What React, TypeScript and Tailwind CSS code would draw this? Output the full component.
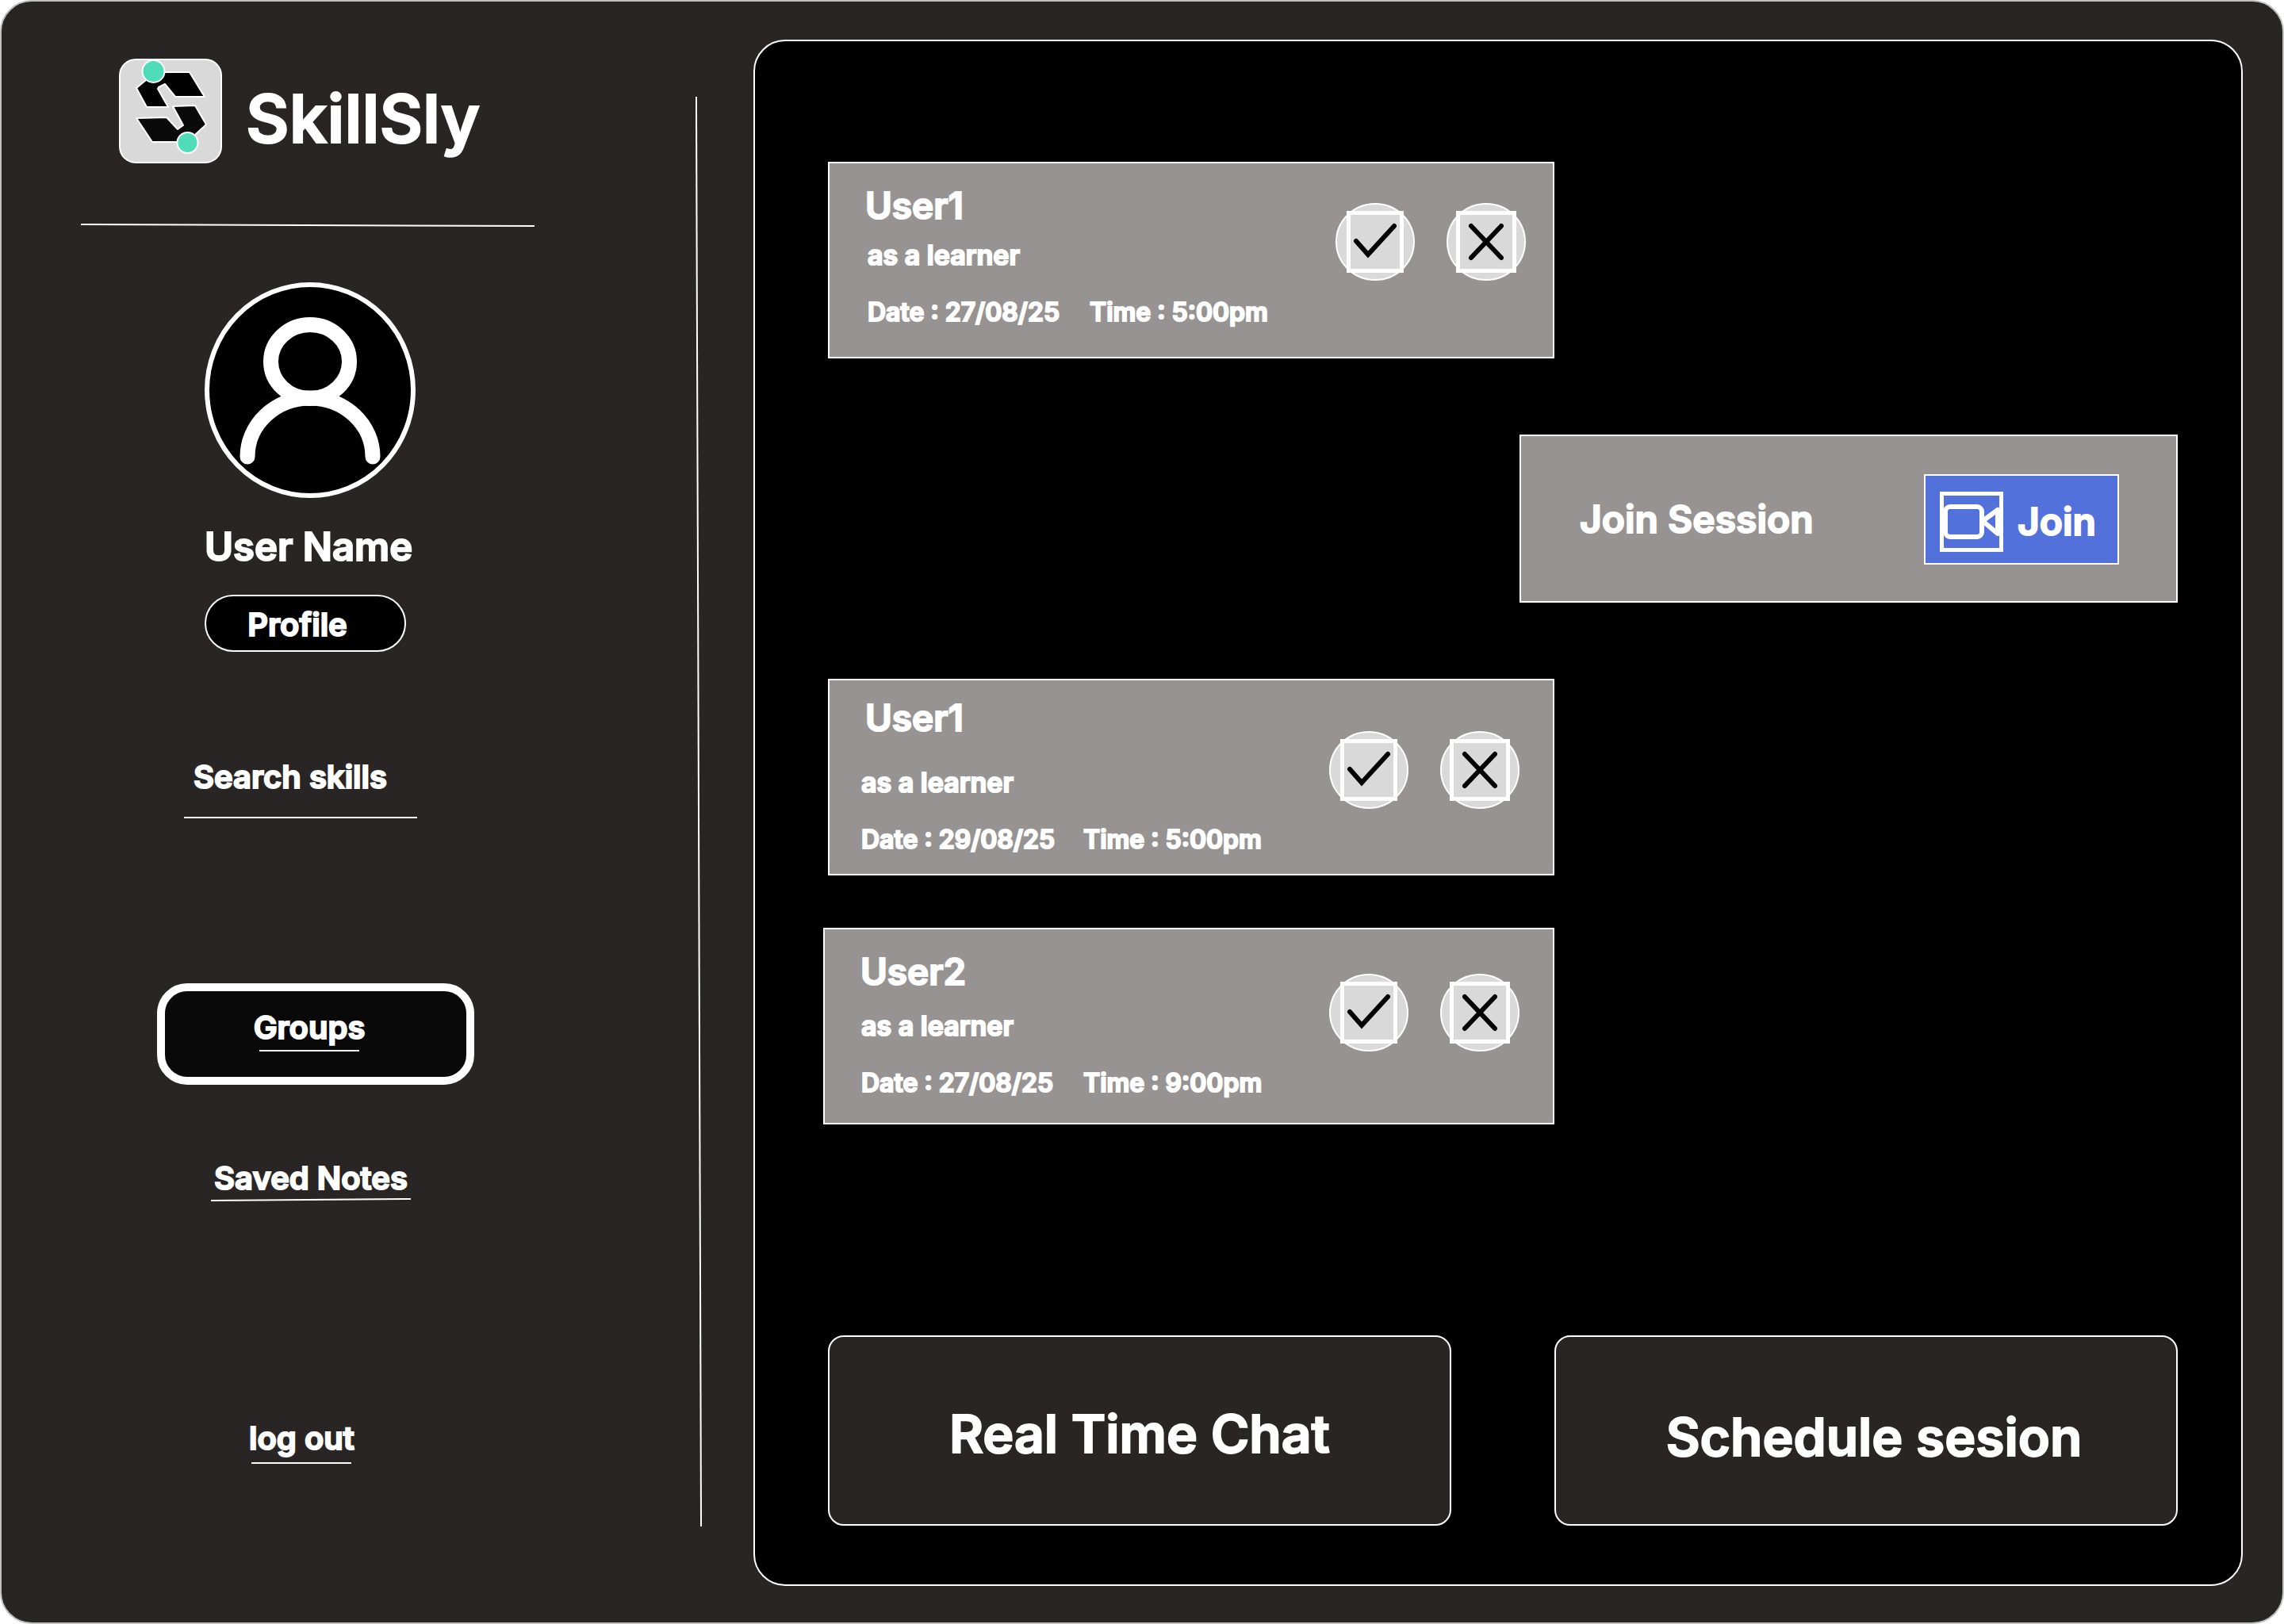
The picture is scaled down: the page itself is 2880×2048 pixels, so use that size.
type RuleProps = { x1: number; y1: number; x2: number; y2: number; className: string };

function SlantedRule({ x1, y1, x2, y2, className }: RuleProps) {
  return (
    <svg className={className} viewBox="0 0 100 100" preserveAspectRatio="none" aria-hidden="true">
      <line x1={x1} y1={y1} x2={x2} y2={y2} stroke="#fff" strokeWidth={2} vectorEffect="non-scaling-stroke" />
    </svg>
  );
}

function Logo() {
  return (
    <svg className="h-[132px] w-[130px] shrink-0" viewBox="0 0 130 132" role="img" aria-label="SkillSly logo">
      <rect x="1" y="1" width="128" height="130" rx="20" fill="#d9d9d9" stroke="#fff" strokeWidth="2" />
      <path d="M34 27 L22 37 L35 61 H62 L49 38 L50 36 L58 32 L71 48 H108 L89 17 H46 Z" fill="#000" stroke="#fff" strokeWidth="2" strokeLinejoin="round" />
      <path d="M68 60 L96 59 L110 83 L96 96 L82 105 H42 L22 75 L60 74 L74 89 L81 84 Z" fill="#0a0a0a" stroke="#fff" strokeWidth="2" strokeLinejoin="round" />
      <circle cx="43.500" cy="16" r="14" fill="#4fdcb9" stroke="#fff" strokeWidth="2" />
      <circle cx="86.500" cy="106" r="13" fill="#4fdcb9" stroke="#fff" strokeWidth="2" />
    </svg>
  );
}

function Avatar() {
  return (
    <svg className="h-[272px] w-[266px]" viewBox="0 0 266 272" role="img" aria-label="User avatar">
      <ellipse cx="133" cy="136" rx="130" ry="133" fill="#000" stroke="#fff" strokeWidth="6" />
      <ellipse cx="133" cy="100" rx="49.500" ry="46.500" fill="none" stroke="#fff" strokeWidth="19" />
      <path d="M54 220 a79 74 0 0 1 158 0" fill="none" stroke="#fff" strokeWidth="19" strokeLinecap="round" />
    </svg>
  );
}

function CheckIcon() {
  return (
    <svg className="h-[98px] w-[100px]" viewBox="0 0 100 98" aria-hidden="true">
      <ellipse cx="50" cy="49" rx="49" ry="48" fill="#d9d9d9" stroke="#fff" strokeWidth="2" />
      <rect x="16.500" y="12.500" width="67" height="73" fill="#d9d9d9" stroke="#fff" strokeWidth="5" />
      <path d="M26 48 L41 65 L74 29" fill="none" stroke="#000" strokeWidth="6" strokeLinecap="round" />
    </svg>
  );
}

function CrossIcon() {
  return (
    <svg className="h-[98px] w-[100px]" viewBox="0 0 100 98" aria-hidden="true">
      <ellipse cx="50" cy="49" rx="49" ry="48" fill="#d9d9d9" stroke="#fff" strokeWidth="2" />
      <rect x="14.500" y="12.500" width="71" height="73" fill="#d9d9d9" stroke="#fff" strokeWidth="5" />
      <path d="M31 29 L69 69 M69 29 L31 69" fill="none" stroke="#000" strokeWidth="6" strokeLinecap="round" />
    </svg>
  );
}

function VideoIcon() {
  return (
    <svg className="h-[76px] w-[80px] shrink-0" viewBox="0 0 80 76" aria-hidden="true">
      <rect x="2.500" y="2.500" width="75" height="71" fill="none" stroke="#fff" strokeWidth="5" />
      <rect x="7" y="19" width="46" height="38" rx="6" fill="none" stroke="#fff" strokeWidth="6" />
      <path d="M54 37 L73 23 V53 Z" fill="none" stroke="#fff" strokeWidth="6" strokeLinejoin="round" />
    </svg>
  );
}

type Request = {
  name: string;
  date: string;
  time: string;
  card: string;
  title: string;
  details: string;
  dateGap: string;
  actions: string;
};

function RequestCard({ name, date, time, card, title, details, dateGap, actions }: Request) {
  return (
    <article className={`flex items-start justify-between border-2 border-white bg-[#979392] ${card}`}>
      <div>
        <h2 className={`text-[46px] leading-14 ${title}`}>{name}</h2>
        <div className={`leading-10 ${details}`}>
          <p className="text-[34px]">as a learner</p>
          <p className={`flex text-[32px] ${dateGap}`}>
            <span className="w-[280px]">Date : {date}</span>
            <span>Time : {time}</span>
          </p>
        </div>
      </div>
      <div className={`flex gap-10 ${actions}`}>
        <button type="button" aria-label={`Accept ${name}`} className="rounded-full">
          <CheckIcon />
        </button>
        <button type="button" aria-label={`Decline ${name}`} className="rounded-full">
          <CrossIcon />
        </button>
      </div>
    </article>
  );
}

export default function App() {
  return (
    <div className="bg-white">
      <div className="flex min-h-screen rounded-[40px] border-2 border-[#c0c0c0] bg-[#292524] font-['Inter',sans-serif] font-semibold text-white [-webkit-text-stroke:2px_white]">
        <aside className="flex w-[948px] shrink-0 justify-between pr-[65px] pl-[100px]">
          <div className="flex flex-col items-start pt-[72px]">
            <header className="ml-12 flex items-center gap-[30px]">
              <Logo />
              <h1 className="mt-5 text-[84px] leading-24">SkillSly</h1>
            </header>
            <SlantedRule x1={0} y1={25} x2={100} y2={75} className="mt-[76px] h-1 w-[572px]" />

            <section className="flex flex-col items-start pl-[156px]">
              <div className="mt-[70px]">
                <Avatar />
              </div>
              <h2 className="mt-[34px] text-[49px] leading-14">User Name</h2>
              <button type="button" className="mt-8 h-[72px] w-[254px] rounded-full border-2 border-white bg-black pt-1 pr-5 text-[40px] leading-12">
                Profile
              </button>
            </section>

            <input
              type="text"
              aria-label="Search skills"
              placeholder="Search skills"
              className="mt-[124px] ml-[130px] h-[86px] w-[294px] border-b-2 border-white bg-transparent pb-[18px] pl-3 text-[40px] placeholder:text-white focus:outline-none"
            />

            <nav className="flex flex-col items-start pl-24">
              <a href="#groups" className="mt-[208px] flex h-32 w-[400px] flex-col items-center justify-center gap-1 rounded-[38px] border-10 border-white bg-[#090909] pr-4 pb-[10px] text-[40px] leading-12">
                Groups
                <span className="h-[2px] w-[126px] bg-white" />
              </a>
              <a href="#notes" className="mt-[94px] ml-[68px] flex flex-col items-center text-[40px] leading-12">
                Saved Notes
                <SlantedRule x1={0} y1={75} x2={100} y2={25} className="mt-px h-1 w-[252px]" />
              </a>
              <a href="#logout" className="mt-[275px] ml-[116px] flex flex-col items-center gap-[6px] text-[40px] leading-12">
                log out
                <span className="h-[2px] w-[126px] bg-white" />
              </a>
            </nav>
          </div>
          <SlantedRule x1={12} y1={0} x2={88} y2={100} className="mt-[120px] mb-[121px] w-2 self-stretch" />
        </aside>

        <main className="mt-12 mr-[50px] mb-[46px] flex flex-1 flex-col rounded-[40px] border-2 border-white bg-black pt-[152px] pr-20 pb-[74px] pl-[92px]">
          <RequestCard
            name="User1"
            date="27/08/25"
            time="5:00pm"
            card="min-h-[248px] w-[916px]"
            title="mt-[25px] ml-[45px]"
            details="mt-[15px] ml-12"
            dateGap="mt-8"
            actions="mt-[50px] mr-[34px]"
          />

          <section className="mt-24 flex min-h-[212px] w-[830px] items-center justify-between self-end border-2 border-white bg-[#979392] pt-[2px] pr-[72px] pl-[74px]">
            <h2 className="text-5xl leading-14">Join Session</h2>
            <button type="button" className="flex h-[114px] w-[246px] items-center gap-[18px] border-2 border-white bg-[#5371da] pt-[6px] pl-[18px] text-5xl leading-14">
              <VideoIcon />
              Join
            </button>
          </section>

          <RequestCard
            name="User1"
            date="29/08/25"
            time="5:00pm"
            card="mt-24 min-h-[248px] w-[916px]"
            title="mt-[19px] ml-[45px]"
            details="mt-[34px] ml-10"
            dateGap="mt-8"
            actions="mt-16 mr-[42px]"
          />
          <RequestCard
            name="User2"
            date="27/08/25"
            time="9:00pm"
            card="mt-[66px] -ml-[6px] min-h-[248px] w-[922px]"
            title="mt-[25px] ml-[45px]"
            details="mt-[21px] ml-[46px]"
            dateGap="mt-8"
            actions="mt-14 mr-[42px]"
          />

          <div className="mt-auto grid grid-cols-2 gap-[130px]">
            <button type="button" className="min-h-[240px] rounded-[20px] border-2 border-white bg-[#292524] pt-2 text-[66px] leading-20">
              Real Time Chat
            </button>
            <button type="button" className="min-h-[240px] rounded-[20px] border-2 border-white bg-[#292524] pt-4 pl-5 text-[66px] leading-20">
              Schedule sesion
            </button>
          </div>
        </main>
      </div>
    </div>
  );
}
